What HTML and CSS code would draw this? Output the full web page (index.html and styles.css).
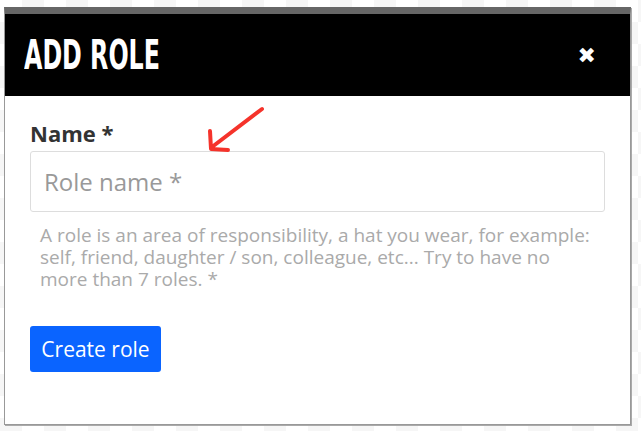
FILE: index.html
```html
<!doctype html>
<html>

<head>
	<meta charset='utf-8'>
	<title>Add role</title>

	<link rel="stylesheet" href="styles.css">
</head>

<body>
	<div class="dialog">
		<div class="head">
			<h1>ADD ROLE</h1>
			<span class="close">&#10006;</span>
		</div>
		<div class="content">
			<label for="role">Name *</label>
			<input type="text" id="role" placeholder="Role name *">
			<p class="help">A role is an area of responsibility, a hat you wear, for example: self, friend, daughter / son, colleague, etc... Try to have no more than 7 roles. *</p>
			<button>Create role</button>
		</div>

		<!-- annotation arrow -->
		<svg class="arrow" width="70" height="50" viewBox="0 0 70 50">
			<path d="M62 4 L12 42 M10 26 L11 44 L28 45" fill="none" stroke="#f5332b" stroke-width="4" stroke-linecap="round" stroke-linejoin="round" />
		</svg>
	</div>
</body>

</html>
```

FILE: styles.css
```css
* {
	box-sizing: border-box;
	font-family: "Open Sans", "Noto Sans", sans-serif;
}

body {
	margin: 0;
	background-color: #fff;
	background-image: conic-gradient(#f6f6f6 25%, #fff 0 50%, #f6f6f6 0 75%, #fff 0);
	background-size: 44px 44px;
	height: 431px;
	overflow: hidden;
}

.dialog {
	position: relative;
	margin: 7px 0 0 4px;
	width: 627px;
	background: #fff;
	border: 1px solid #999;
	border-top: 7px solid #666;
	box-shadow: 1px 1px 0 #aaa;
}

.head {
	display: flex;
	align-items: center;
	justify-content: space-between;
	height: 82px;
	background: #000;
	padding: 0 34px 0 19px;
}

.head h1 {
	margin: 0;
	color: #fff;
	font-family: "DejaVu Sans", sans-serif;
	font-stretch: condensed;
	font-weight: bold;
	font-size: 40px;
	transform: scaleX(0.66);
	transform-origin: left center;
	letter-spacing: 0;
}

.close {
	color: #fff;
	font-size: 22px;
	font-family: "DejaVu Sans", sans-serif;
}

.content {
	padding: 23px 25px 52px 25px;
}

label {
	display: block;
	font-weight: bold;
	font-size: 22px;
	color: #333;
	line-height: 28px;
	margin-bottom: 4px;
}

input[type="text"] {
	display: block;
	width: 575px;
	height: 61px;
	border: 1px solid #ddd;
	border-radius: 3px;
	padding: 0 13px;
	font-size: 24px;
	outline: none;
}

input::placeholder {
	color: #999;
}

.help {
	max-width: 555px;
	margin: 12px 0 0 10px;
	font-size: 19px;
	line-height: 22px;
	color: #aaa;
}

button {
	margin-top: 36px;
	background: #0a64ff;
	color: #fff;
	border: none;
	border-radius: 3px;
	font-size: 21px;
	width: 131px;
	height: 46px;
}

.arrow {
	position: absolute;
	left: 195px;
	top: 91px;
}
```
